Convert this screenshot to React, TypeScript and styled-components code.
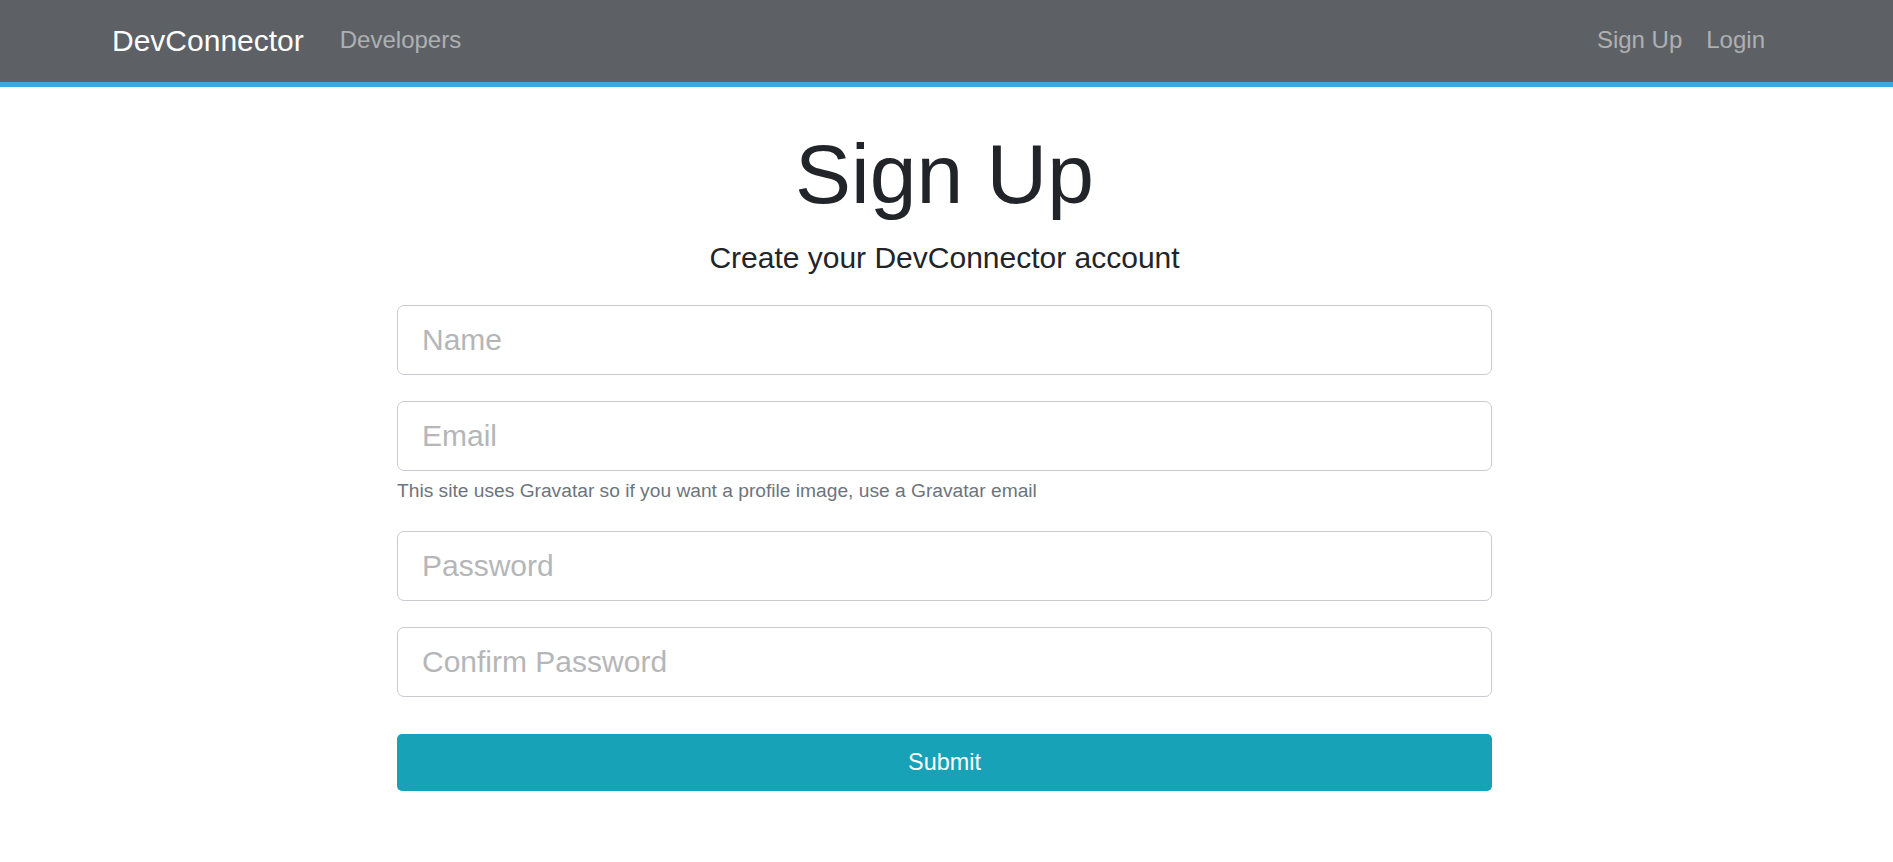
import React from "react";
import styled, { createGlobalStyle } from "styled-components";

const GlobalStyle = createGlobalStyle`
  html, body {
    margin: 0;
    padding: 0;
    background: #ffffff;
  }
  body {
    font-family: "Liberation Sans", Arial, Helvetica, sans-serif;
    color: #212529;
  }
  * {
    box-sizing: border-box;
  }
`;

const Navbar = styled.nav`
  display: flex;
  align-items: center;
  height: 87px;
  padding: 0 116px 2px 112px;
  background: #5d6166;
  border-bottom: 5px solid #3aa8de;
`;

const Brand = styled.a`
  font-size: 30px;
  line-height: 1.5;
  color: #ffffff;
  text-decoration: none;
  margin-right: 24px;
  white-space: nowrap;
`;

const NavList = styled.ul<{ $right?: boolean }>`
  display: flex;
  align-items: center;
  list-style: none;
  margin: 0 0 0 ${(p) => (p.$right ? "auto" : "0")};
  padding: 0;
`;

const NavLink = styled.a`
  display: block;
  padding: 0 12px;
  font-size: 24px;
  line-height: 1.5;
  color: rgba(255, 255, 255, 0.5);
  text-decoration: none;
  white-space: nowrap;
`;

const Main = styled.main`
  width: 1095px;
  margin: 37px 0 0 calc((100% - 1095px) / 2 - 2px);
`;

const Title = styled.h1`
  margin: 0;
  font-size: 84px;
  font-weight: 400;
  line-height: 1.2;
  text-align: center;
  color: #212529;
`;

const Lead = styled.p`
  margin: 10px 0 0;
  font-size: 30px;
  line-height: 1.5;
  text-align: center;
  color: #212529;
`;

const Form = styled.form`
  display: flex;
  flex-direction: column;
  margin-top: 25px;
`;

const FormGroup = styled.div`
  margin-bottom: 26px;
`;

const Input = styled.input`
  display: block;
  width: 100%;
  height: 70px;
  padding: 0 24px;
  font-family: "Liberation Sans", Arial, Helvetica, sans-serif;
  font-size: 30px;
  color: #495057;
  background: #ffffff;
  border: 1px solid #c9cbd0;
  border-radius: 7px;
  outline: none;

  &::placeholder {
    color: #b5b6b8;
    opacity: 1;
  }
`;

const HelpText = styled.small`
  display: block;
  margin-top: 7px;
  font-size: 19.2px;
  line-height: 26.8px;
  color: #6c757d;
`;

const SubmitButton = styled.button`
  display: block;
  width: 100%;
  height: 57px;
  margin-top: 11px;
  font-family: "Liberation Sans", Arial, Helvetica, sans-serif;
  font-size: 23.4px;
  color: #ffffff;
  background: #17a2b8;
  border: none;
  border-radius: 5px;
  cursor: pointer;
`;

export default function App() {
  return (
    <>
      <GlobalStyle />
      <Navbar>
        <Brand href="#">DevConnector</Brand>
        <NavList>
          <li>
            <NavLink href="#">Developers</NavLink>
          </li>
        </NavList>
        <NavList $right>
          <li>
            <NavLink href="#">Sign Up</NavLink>
          </li>
          <li>
            <NavLink href="#">Login</NavLink>
          </li>
        </NavList>
      </Navbar>
      <Main>
        <Title>Sign Up</Title>
        <Lead>Create your DevConnector account</Lead>
        <Form onSubmit={(e) => e.preventDefault()}>
          <FormGroup>
            <Input type="text" placeholder="Name" />
          </FormGroup>
          <FormGroup>
            <Input type="email" placeholder="Email" />
            <HelpText>
              This site uses Gravatar so if you want a profile image, use a Gravatar email
            </HelpText>
          </FormGroup>
          <FormGroup>
            <Input type="password" placeholder="Password" />
          </FormGroup>
          <FormGroup>
            <Input type="password" placeholder="Confirm Password" />
          </FormGroup>
          <SubmitButton type="submit">Submit</SubmitButton>
        </Form>
      </Main>
    </>
  );
}
